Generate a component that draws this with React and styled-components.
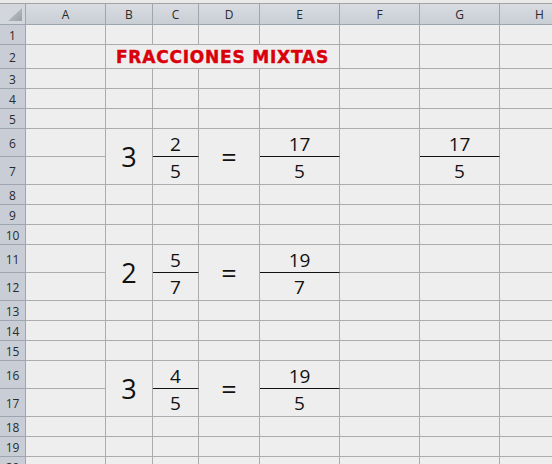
import React from "react"
import styled, { createGlobalStyle } from "styled-components"

const GlobalStyle = createGlobalStyle`
  html, body {
    margin: 0;
    padding: 0;
    width: 552px;
    height: 464px;
    overflow: hidden;
    background: #eeeeee;
  }
`

const COLS = [
  { name: "A", width: 80 },
  { name: "B", width: 47 },
  { name: "C", width: 46 },
  { name: "D", width: 61 },
  { name: "E", width: 80 },
  { name: "F", width: 80 },
  { name: "G", width: 80 },
  { name: "H", width: 80 },
]

const ROW_HEIGHTS = [20, 24, 20, 20, 20, 28, 28, 20, 20, 20, 28, 28, 20, 20, 20, 28, 28, 20, 20, 20]

// merged ranges: top-left cell -> row span / col span
const MERGES = {
  B2: { cols: 4, rows: 1 },
  B6: { cols: 1, rows: 2 },
  D6: { cols: 1, rows: 2 },
  F6: { cols: 1, rows: 2 },
  H6: { cols: 1, rows: 2 },
  B11: { cols: 1, rows: 2 },
  D11: { cols: 1, rows: 2 },
  B16: { cols: 1, rows: 2 },
  D16: { cols: 1, rows: 2 },
}

// cell contents, "num" cells carry the fraction bar under them
const DATA = {
  B2: { text: "FRACCIONES MIXTAS", kind: "title" },
  B6: { text: "3", kind: "whole" },
  C6: { text: "2", kind: "num" },
  C7: { text: "5", kind: "den" },
  D6: { text: "=", kind: "whole" },
  E6: { text: "17", kind: "num" },
  E7: { text: "5", kind: "den" },
  G6: { text: "17", kind: "num" },
  G7: { text: "5", kind: "den" },
  B11: { text: "2", kind: "whole" },
  C11: { text: "5", kind: "num" },
  C12: { text: "7", kind: "den" },
  D11: { text: "=", kind: "whole" },
  E11: { text: "19", kind: "num" },
  E12: { text: "7", kind: "den" },
  B16: { text: "3", kind: "whole" },
  C16: { text: "4", kind: "num" },
  C17: { text: "5", kind: "den" },
  D16: { text: "=", kind: "whole" },
  E16: { text: "19", kind: "num" },
  E17: { text: "5", kind: "den" },
}

const TopStrip = styled.div`
  height: 3px;
  background: #e9e9e9;
  border-bottom: 1px solid #a3a3a3;
`

const Sheet = styled.div`
  display: grid;
  grid-template-columns: 26px ${COLS.map((c) => `${c.width}px`).join(" ")};
  grid-template-rows: 21px ${ROW_HEIGHTS.map((h) => `${h}px`).join(" ")};
  font-family: "Open Sans", "Liberation Sans", sans-serif;
`

const Header = styled.div`
  box-sizing: border-box;
  display: flex;
  align-items: center;
  justify-content: center;
  background: linear-gradient(to bottom, #d9dde2, #c9ced5);
  border-right: 1px solid #9ea5ae;
  border-bottom: 1px solid #9ea5ae;
  color: #2a2a2a;
  font-size: 12px;
  padding-top: ${({ $row }) => ($row ? "1px" : "0")};
`

const RowHeader = styled(Header)`
  background: #c9ced6;
  font-size: 12px;
`

const Corner = styled(Header)`
  position: relative;
  background: #d3d7dd;
`

const CornerMark = styled.svg`
  position: absolute;
  right: 3px;
  bottom: 3px;
  width: 14px;
  height: 13px;
`

const Cell = styled.div`
  box-sizing: border-box;
  display: flex;
  align-items: center;
  justify-content: center;
  grid-column: ${({ $col }) => $col} / span ${({ $cols }) => $cols};
  grid-row: ${({ $row }) => $row} / span ${({ $rows }) => $rows};
  background: #eeeeee;
  border-right: 1px solid #acacac;
  border-bottom: 1px solid ${({ $bar }) => ($bar ? "#111111" : "#acacac")};
  color: #111111;
  font-size: ${({ $kind }) => ($kind === "whole" ? "27px" : "19px")};
  line-height: 1;
  padding-top: ${({ $kind }) => ($kind === "num" ? "3px" : $kind === "den" ? "2px" : "0")};
`

const Title = styled.span`
  font-family: "DejaVu Sans", sans-serif;
  font-weight: 900;
  font-size: 17px;
  letter-spacing: 0.8px;
  color: #d8000a;
  -webkit-text-stroke: 0.5px #d8000a;
  text-shadow: 0 0 1px #ffffff, 0 0 2px #ffffff;
  margin-top: 1px;
`

const cellKey = (col, row) => `${col}${row}`

const buildCells = () => {
  const covered = new Set()
  Object.entries(MERGES).forEach(([key, span]) => {
    const col = key[0]
    const row = parseInt(key.slice(1), 10)
    const ci = COLS.findIndex((c) => c.name === col)
    for (let r = 0; r < span.rows; r++) {
      for (let c = 0; c < span.cols; c++) {
        if (r || c) covered.add(cellKey(COLS[ci + c].name, row + r))
      }
    }
  })

  const cells = []
  ROW_HEIGHTS.forEach((_, ri) => {
    const row = ri + 1
    COLS.forEach((col, ci) => {
      const key = cellKey(col.name, row)
      if (covered.has(key)) return
      const span = MERGES[key] || { cols: 1, rows: 1 }
      const data = DATA[key]
      cells.push(
        <Cell
          key={key}
          $col={ci + 2}
          $row={row + 1}
          $cols={span.cols}
          $rows={span.rows}
          $kind={data && data.kind}
          $bar={data && data.kind === "num"}
        >
          {data && (data.kind === "title" ? <Title>{data.text}</Title> : data.text)}
        </Cell>
      )
    })
  })
  return cells
}

const App = () => {
  return (
    <>
      <GlobalStyle />
      <TopStrip />
      <Sheet>
        <Corner style={{ gridColumn: 1, gridRow: 1 }}>
          <CornerMark viewBox="0 0 14 13">
            <defs>
              <linearGradient id="cm" x1="0" y1="0" x2="1" y2="1">
                <stop offset="0" stopColor="#c2c7ce" />
                <stop offset="1" stopColor="#9aa0a8" />
              </linearGradient>
            </defs>
            <polygon points="14,0 14,13 0,13" fill="url(#cm)" />
          </CornerMark>
        </Corner>
        {COLS.map((c) => (
          <Header key={c.name}>{c.name}</Header>
        ))}
        {ROW_HEIGHTS.map((_, i) => (
          <RowHeader key={i} $row style={{ gridColumn: 1, gridRow: i + 2 }}>
            {i + 1}
          </RowHeader>
        ))}
        {buildCells()}
      </Sheet>
    </>
  )
}

export default App
